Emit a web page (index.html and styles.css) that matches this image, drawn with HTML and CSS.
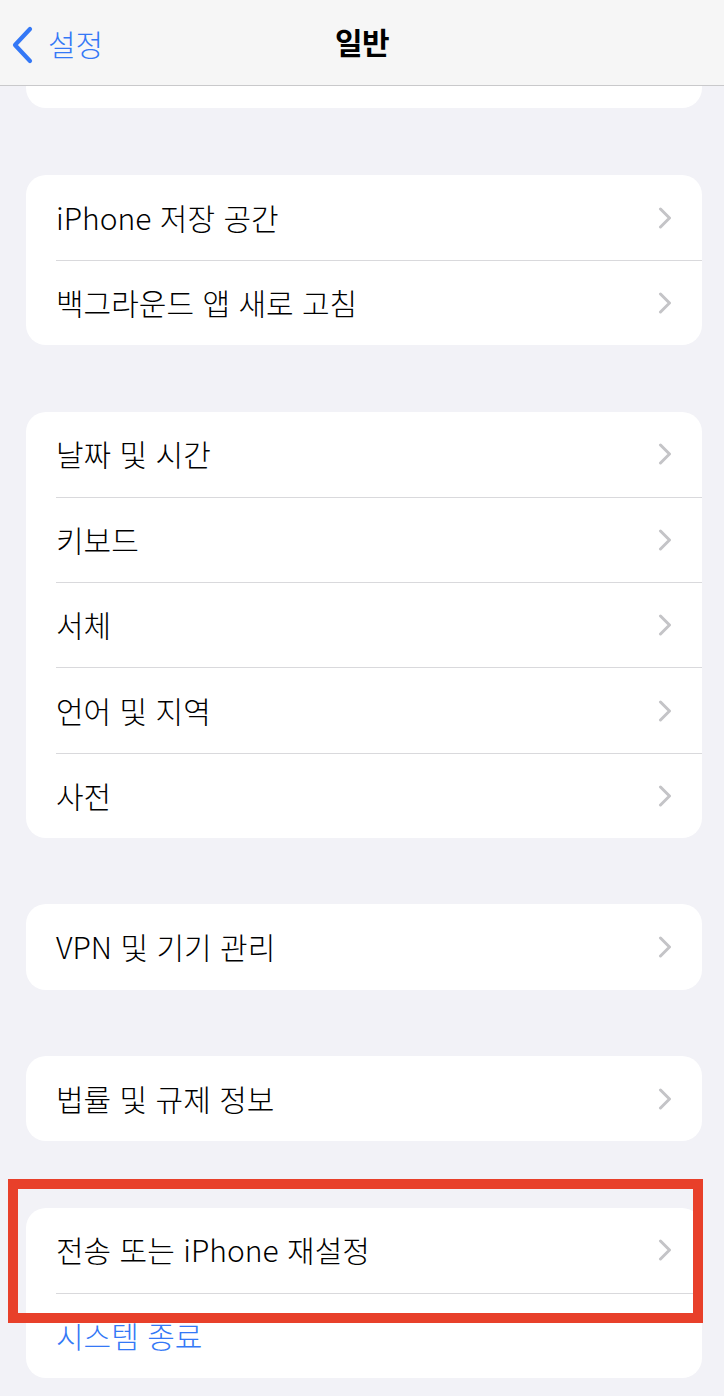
FILE: index.html
```html
<!DOCTYPE html>
<html lang="ko">
<head>
    <meta charset="UTF-8">
    <meta name="viewport" content="width=device-width, initial-scale=1">
    <title>일반</title>
    <link rel="stylesheet" href="styles.css">
</head>
<body>
    <div class="screen">
        <header class="navbar">
            <a class="back" href="#">
                <svg class="back-icon" width="24" height="38" viewBox="0 0 24 38">
                    <path d="M20 3 L5 19 L20 35" fill="none" stroke="currentColor" stroke-width="4.2" stroke-linecap="round" stroke-linejoin="round"/>
                </svg>
                <span>설정</span>
            </a>
            <h1 class="title">일반</h1>
        </header>

        <div class="card-tail"></div>

        <div class="list">
            <section class="card">
                <div class="row"><div class="row-inner"><span>iPhone 저장 공간</span><i class="chevron"></i></div></div>
                <div class="row"><div class="row-inner"><span>백그라운드 앱 새로 고침</span><i class="chevron"></i></div></div>
            </section>

            <section class="card">
                <div class="row"><div class="row-inner"><span>날짜 및 시간</span><i class="chevron"></i></div></div>
                <div class="row"><div class="row-inner"><span>키보드</span><i class="chevron"></i></div></div>
                <div class="row"><div class="row-inner"><span>서체</span><i class="chevron"></i></div></div>
                <div class="row"><div class="row-inner"><span>언어 및 지역</span><i class="chevron"></i></div></div>
                <div class="row"><div class="row-inner"><span>사전</span><i class="chevron"></i></div></div>
            </section>

            <section class="card">
                <div class="row"><div class="row-inner"><span>VPN 및 기기 관리</span><i class="chevron"></i></div></div>
            </section>

            <section class="card">
                <div class="row"><div class="row-inner"><span>법률 및 규제 정보</span><i class="chevron"></i></div></div>
            </section>

            <section class="card card-last">
                <div class="row"><div class="row-inner"><span>전송 또는 iPhone 재설정</span><i class="chevron"></i></div></div>
                <div class="row"><div class="row-inner"><span class="action">시스템 종료</span></div></div>
                <div class="highlight"></div>
            </section>
        </div>
    </div>
</body>
</html>
```

FILE: styles.css
```css
body { margin: 0; background: #f2f2f7; font-family: "Noto Sans CJK KR", "Noto Sans", sans-serif; color: #000; }
.screen { width: 724px; min-height: 1396px; }

.navbar { height: 85px; border-bottom: 1px solid #c9c9cb; background: #f6f6f6; display: flex; align-items: center; justify-content: center; position: relative; }
.back { position: absolute; left: 10px; top: 25px; display: flex; align-items: center; gap: 14px; color: #3478f6; text-decoration: none; font-size: 30px; font-weight: 300; }
.back span { margin-top: -4px; }
.title { margin: 0 0 4px; font-size: 30px; font-weight: 600; letter-spacing: -0.5px; }

.card-tail { height: 22px; margin: 0 22px 0 26px; background: #fff; border-radius: 0 0 20px 20px; }

.list { display: flex; flex-direction: column; gap: 66.5px; padding: 67px 22px 0 26px; }
.card { background: #fff; border-radius: 20px; }
.card-last { position: relative; }

.row { padding-left: 30px; }
.row-inner { height: 85.2px; display: flex; align-items: center; justify-content: space-between; padding-right: 30px; font-size: 30px; font-weight: 300; box-sizing: border-box; }
.row + .row .row-inner { border-top: 1px solid #d9d9dc; }
.row-inner span { margin-top: -2px; }
.action { color: #3478f6; }

.chevron { width: 14px; height: 22px; background: no-repeat center / 14px 22px url("data:image/svg+xml,%3Csvg xmlns='http://www.w3.org/2000/svg' width='14' height='22' viewBox='0 0 14 22'%3E%3Cpath d='M2.5 2 L11.5 11 L2.5 20' fill='none' stroke='%23c4c4c7' stroke-width='3' stroke-linecap='round' stroke-linejoin='round'/%3E%3C/svg%3E"); }

.highlight { position: absolute; left: -18px; top: -29px; width: 675px; height: 124px; border: 10px solid #e8402a; }
```
